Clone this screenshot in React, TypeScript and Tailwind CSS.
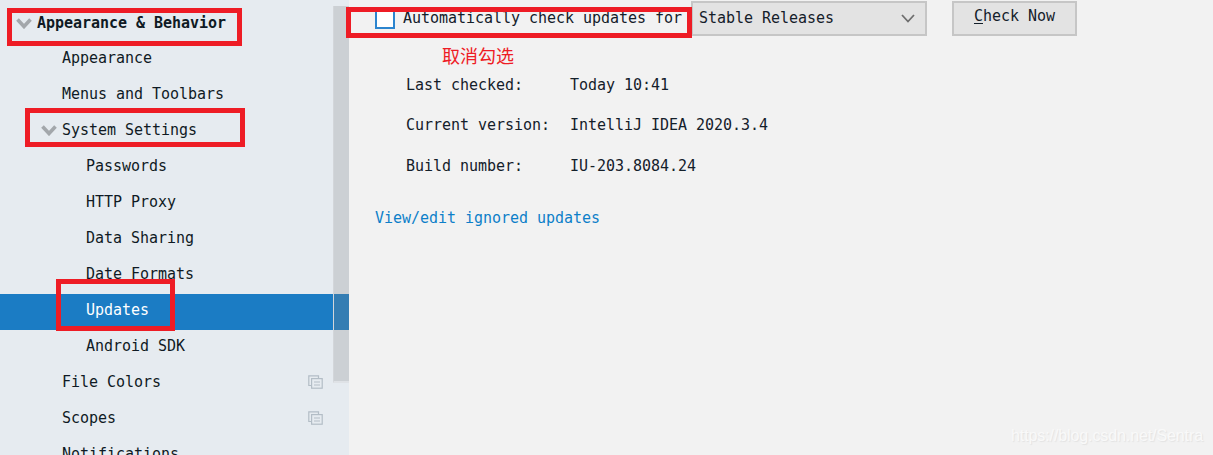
const mono = "font-['DejaVu_Sans_Mono','Liberation_Mono',monospace]";

function Chevron({ className = "" }: { className?: string }) {
  return (
    <svg width="16" height="11" viewBox="0 0 16 11" className={className} aria-hidden="true">
      <path d="M1.5 1.5 L8 8.5 L14.5 1.5" fill="none" stroke="#a3a7ab" strokeWidth="3.6" />
    </svg>
  );
}

function CopyIcon() {
  return (
    <svg width="15" height="14" viewBox="0 0 15 14" fill="none" stroke="#b3bdc6" strokeWidth="1.2" aria-hidden="true">
      <path d="M3 10.5 H0.8 V0.8 H10.5 V3" />
      <rect x="3.6" y="3.6" width="10.6" height="9.6" />
      <path d="M6 7 H12 M6 10 H12" />
    </svg>
  );
}

function Row({
  label,
  pad,
  bold,
  selected,
  chevron,
  copy,
}: {
  label: string;
  pad: string;
  bold?: boolean;
  selected?: boolean;
  chevron?: boolean;
  copy?: boolean;
}) {
  return (
    <div
      className={`relative flex h-9 shrink-0 items-center ${bold ? "pb-0.5" : "pb-1"} ${pad} ${selected ? "bg-[#1b7cc4] text-white" : "text-[#0f1a24]"} ${bold ? "font-bold" : ""}`}
    >
      {chevron && <Chevron className="absolute -ml-[21px]" />}
      <span className="flex-1 whitespace-pre">{label}</span>
      {copy && (
        <span className="mr-[26px] flex">
          <CopyIcon />
        </span>
      )}
    </div>
  );
}

function RedBox({ className }: { className: string }) {
  return <div className={`pointer-events-none absolute border-[5px] border-[#ee1c25] ${className}`} />;
}

function Info({ label, value, className }: { label: string; value: string; className: string }) {
  return (
    <div className={`flex h-5 items-center pl-[57px] text-[#14202a] ${className}`}>
      <span className="w-[164px] whitespace-pre">{label}</span>
      <span className="whitespace-pre">{value}</span>
    </div>
  );
}

export default function App() {
  return (
    <div className={`relative flex h-[455px] w-[1213px] overflow-hidden bg-[#f2f2f2] text-[15px] leading-5 tracking-[-0.03px] ${mono}`}>
      <aside className="relative flex h-full w-[349px] shrink-0 flex-col overflow-hidden bg-[#e6ebf0] pt-1.5">
        <Row label="Appearance & Behavior" pad="pl-[37px]" bold chevron />
        <Row label="Appearance" pad="pl-[62px]" />
        <Row label="Menus and Toolbars" pad="pl-[62px]" />
        <Row label="System Settings" pad="pl-[62px]" chevron />
        <Row label="Passwords" pad="pl-[86px]" />
        <Row label="HTTP Proxy" pad="pl-[86px]" />
        <Row label="Data Sharing" pad="pl-[86px]" />
        <Row label="Date Formats" pad="pl-[86px]" />
        <Row label="Updates" pad="pl-[86px]" selected />
        <Row label="Android SDK" pad="pl-[86px]" />
        <Row label="File Colors" pad="pl-[62px]" copy />
        <Row label="Scopes" pad="pl-[62px]" copy />
        <Row label="Notifications" pad="pl-[62px]" />
        <div className="absolute left-[333px] top-[6px] h-[377px] w-[16px] border-b-2 border-l border-b-[#dfe2e6] border-l-[#d3d6da] bg-[#808080]/25" />
      </aside>

      <main className="flex min-w-0 flex-1 flex-col">
        <div className="flex h-[37px] items-start pt-px">
          <div className="ml-[26px] mt-2 h-5 w-5 border-2 border-[#2c85cf] bg-white" />
          <span className="ml-2 mt-[7px] w-[288px] whitespace-pre text-[#14202a]">Automatically check updates for</span>
          <div className="flex h-[35px] w-[236px] items-center justify-between border-2 border-[#c6c6c6] bg-[#e3e3e3] pb-0.5 pl-1.5 pr-2 text-[#14202a]">
            <span>Stable Releases</span>
            <svg width="14" height="9" viewBox="0 0 14 9" className="mr-0.5 mt-0.5" aria-hidden="true">
              <path d="M1 1 L7 7.5 L13 1" fill="none" stroke="#6e6e6e" strokeWidth="1.8" />
            </svg>
          </div>
          <button className="ml-[25px] h-[35px] w-[125px] border-2 border-[#c6c6c6] bg-[#e3e3e3] pb-1.5 text-center text-[#14202a]">
            <span className="underline underline-offset-2">C</span>heck Now
          </button>
        </div>
        <div className="ml-[93px] mt-[7px] h-[22px] text-[18px] leading-[22px] tracking-normal text-[#ee1c25] font-['Noto_Sans_CJK_SC',sans-serif]">取消勾选</div>
        <Info label="Last checked:" value="Today 10:41" className="mt-[9px]" />
        <Info label="Current version:" value="IntelliJ IDEA 2020.3.4" className="mt-5" />
        <Info label="Build number:" value="IU-203.8084.24" className="mt-[21px]" />
        <a className="ml-[26px] mt-[32px] h-5 text-[#0d7fc9]">View/edit ignored updates</a>
      </main>

      <RedBox className="left-[7px] top-2 h-[38px] w-[235px]" />
      <RedBox className="left-[25px] top-[108px] h-[39px] w-[220px]" />
      <RedBox className="left-[56px] top-[279px] h-[52px] w-[119px]" />
      <RedBox className="left-[346px] top-[7px] h-[31px] w-[346px]" />

      <div className="absolute bottom-[9px] right-[10px] text-[16px] leading-5 tracking-[-0.1px] text-[#f9f9f9] [text-shadow:1px_1px_1px_#e2e2e2] font-['Liberation_Sans',sans-serif]">
        https://blog.csdn.net/Sentra
      </div>
    </div>
  );
}
